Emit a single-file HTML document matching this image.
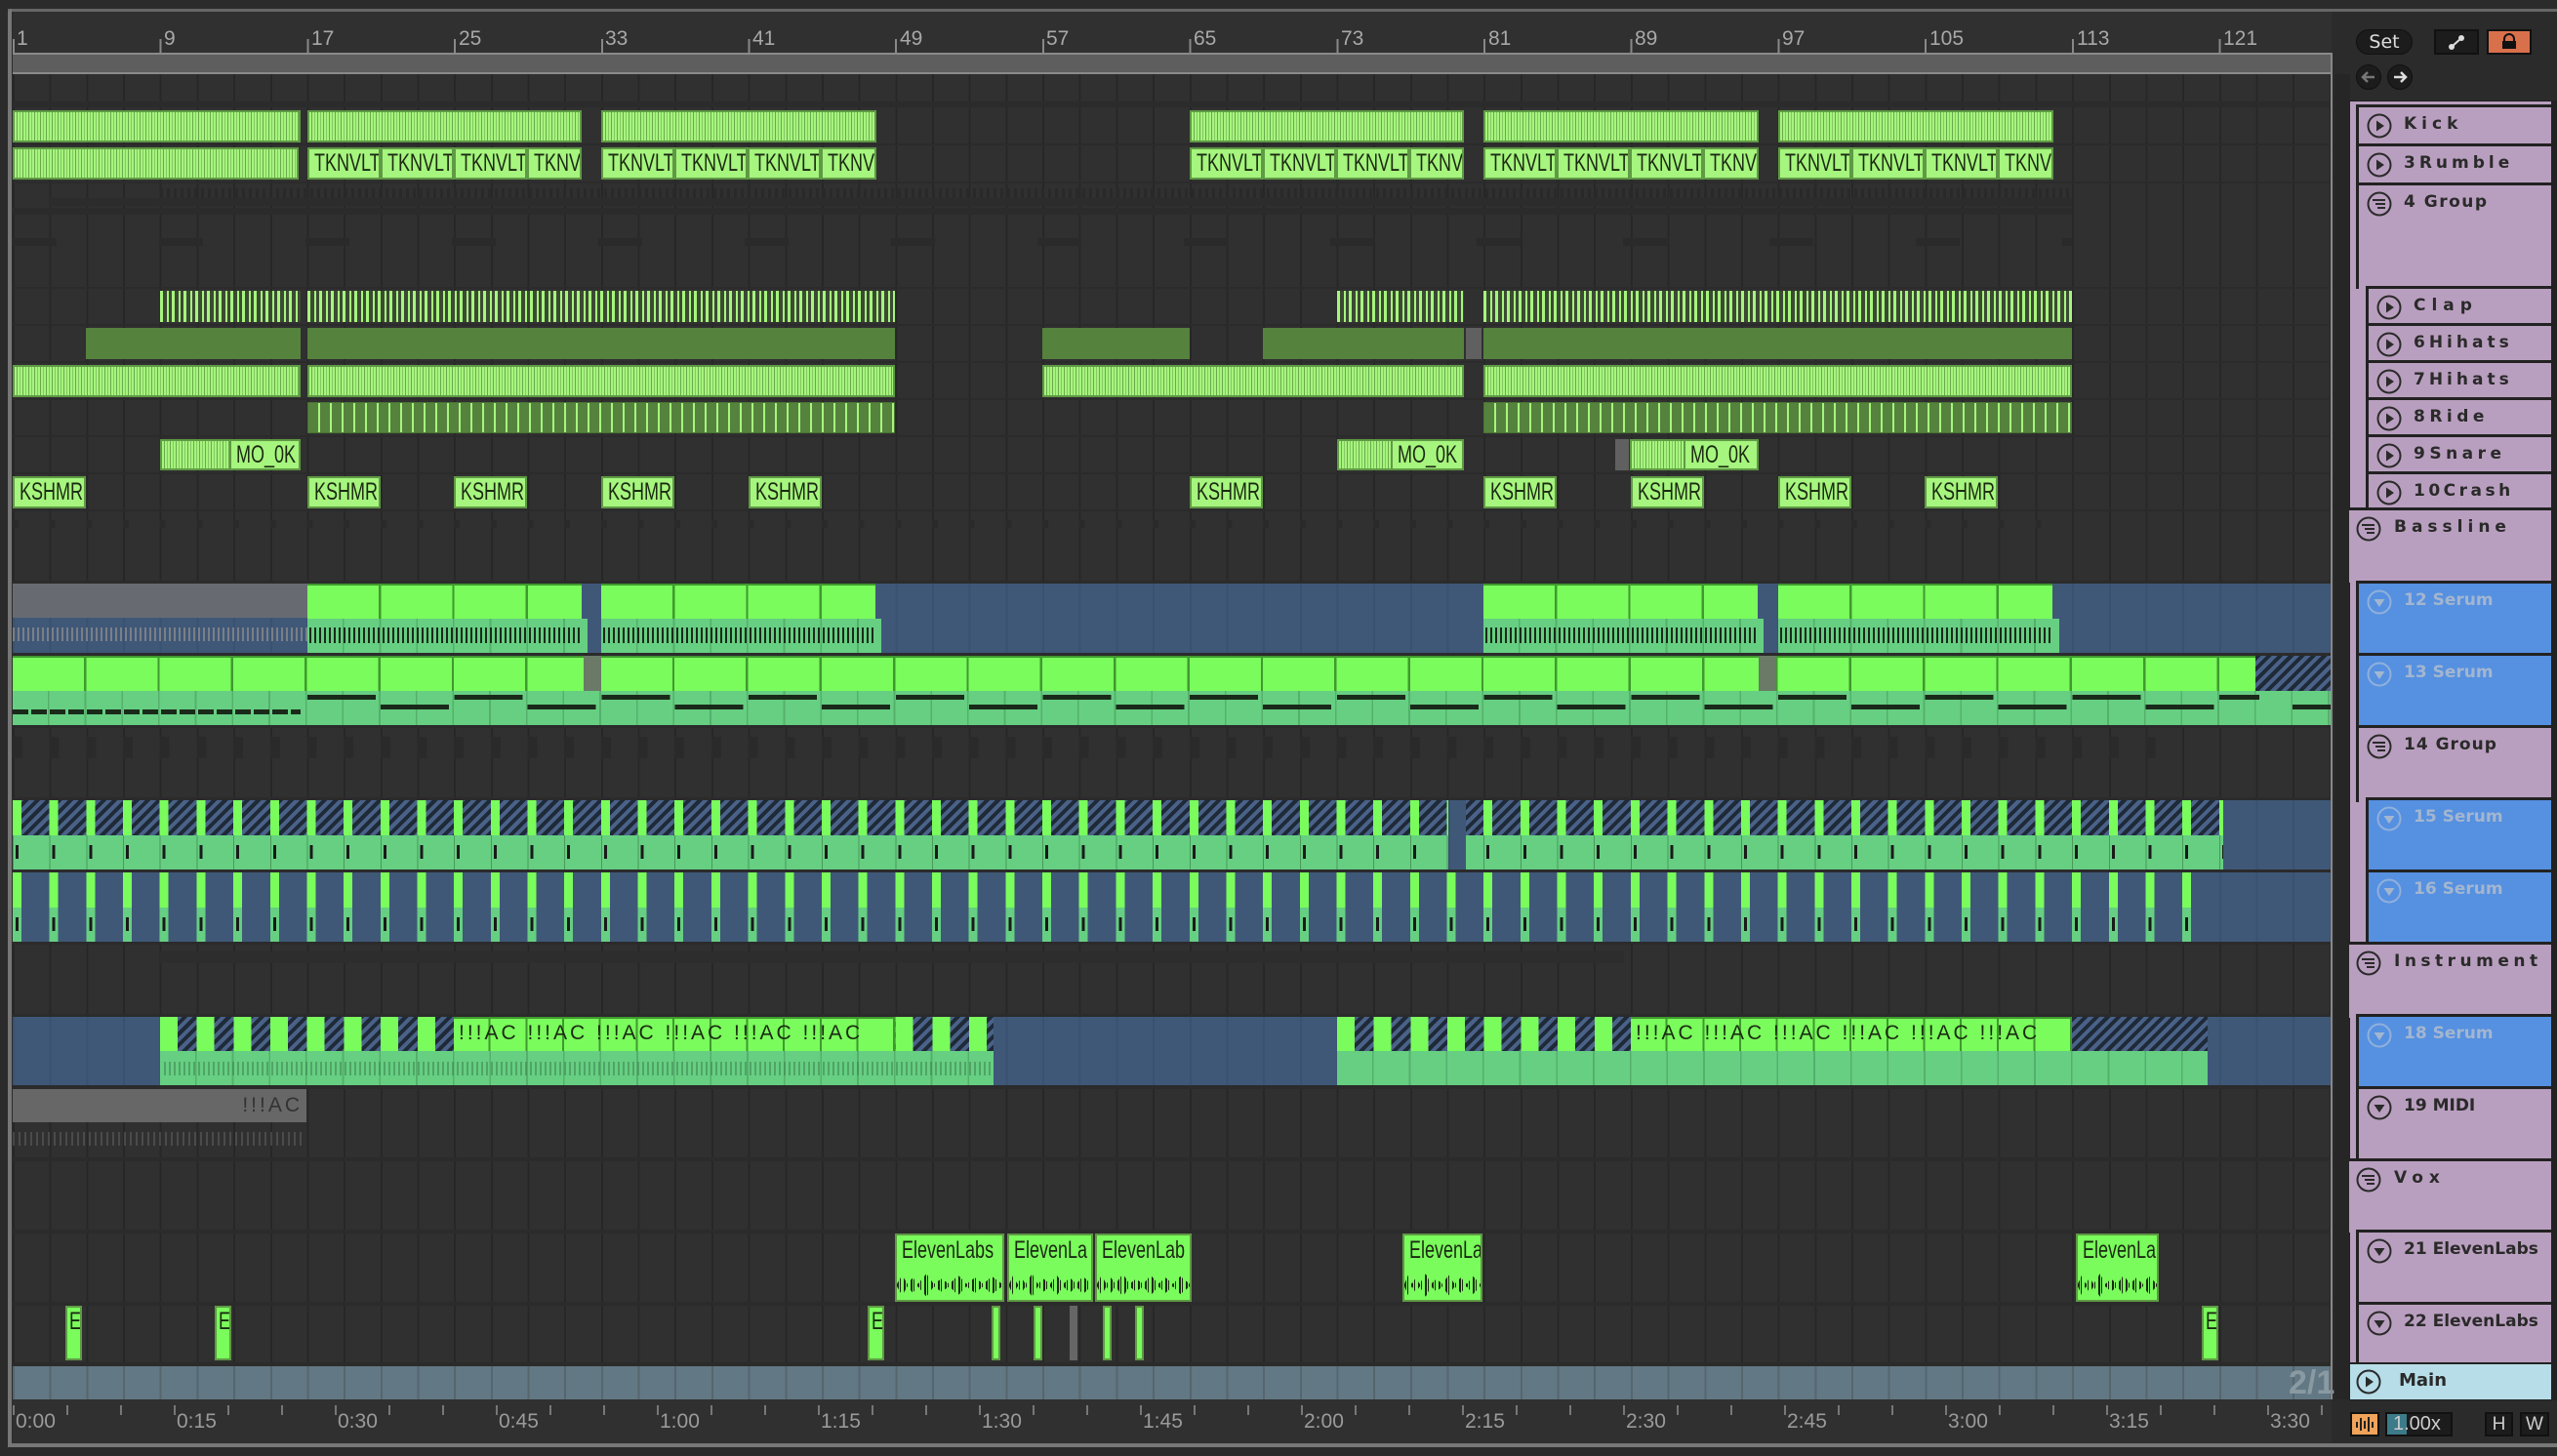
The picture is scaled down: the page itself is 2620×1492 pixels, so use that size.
<!DOCTYPE html>
<html><head><meta charset="utf-8"><style>
*{margin:0;padding:0;box-sizing:border-box}
body{width:2620px;height:1492px;background:#2b2b2b;position:relative;overflow:hidden;font-family:"Liberation Sans",sans-serif}
div{position:absolute}
.row{left:13px;width:2375px;background:repeating-linear-gradient(90deg,#272727 0 2px,transparent 2px 37.68px),#303030}
.st{background:repeating-linear-gradient(90deg,#a6f57e 0 2px,#6aa94c 2px 3px,#a6f57e 3px 5px,#86c862 5px 6px);border:2px solid #5f9a44}
.tx{background:#a6f57e;border:2px solid #5f9a44;color:#1b2a12;font-size:25px;line-height:28px;padding-left:5px;overflow:hidden;white-space:nowrap}
.tx i{font-style:normal;display:inline-block;transform:scaleX(.72);transform-origin:0 50%}
.clap{background:repeating-linear-gradient(90deg,#a6f57e 0 3px,#3c4a33 3px 7px,#a6f57e 7px 9px,#3c4a33 9px 12px)}
.dg{background:#55823d}
.ride{background:repeating-linear-gradient(90deg,#55823d 0 10px,#a6f57e 10px 12px);border:1px solid #4a7434}
.hd{background:repeating-linear-gradient(90deg,#7afc5c 0 73px,#3f9a2e 73px 75.36px);border-top:2px solid #3f9a2e}
.bd{background:repeating-linear-gradient(90deg,#66cf82 0 36px,#55b06c 36px 37.68px)}
.blue{background:repeating-linear-gradient(90deg,#3a5272 0 2px,transparent 2px 37.68px),#3f5878}
.hatch{background:repeating-linear-gradient(135deg,#1f2a38 0 4px,#4a6288 4px 8px)}
.tick{background:repeating-linear-gradient(90deg,#1a2a1a 0 2px,transparent 2px 5px)}
.num{color:#a8a8a8;font-size:21px;top:28px}
.tnum{color:#9a9a9a;font-size:21px;top:1445px}
.pr{background:#b99fbf;border-top:3px solid #222;border-left:3px solid #222;right:6px;color:#2a2a2a;font-family:"DejaVu Sans",sans-serif;font-weight:bold;font-size:17px;overflow:hidden;white-space:nowrap}
.pr span{position:absolute;top:7px}
.pr svg{position:absolute;top:6px}
.bl{background:#5690e0;color:#a3b6d0}
.lab{color:#1b2a12;font-size:21px;padding-left:4px;overflow:hidden;white-space:nowrap;line-height:30px}
.wv{background:repeating-linear-gradient(90deg,#1a2a12 0 2px,transparent 2px 3px,#1a2a12 3px 4px,transparent 4px 7px);clip-path:polygon(0 45%,5% 10%,10% 45%,15% 20%,20% 45%,28% 5%,35% 45%,42% 25%,50% 45%,58% 10%,66% 45%,74% 20%,82% 45%,90% 15%,100% 45%,100% 55%,90% 85%,82% 55%,74% 80%,66% 55%,58% 90%,50% 55%,42% 75%,35% 55%,28% 95%,20% 55%,15% 80%,10% 55%,5% 90%,0 55%)}
</style></head><body>
<div style="left:8px;top:9px;width:2612px;height:3px;background:#666"></div>
<div style="left:8px;top:9px;width:4px;height:1473px;background:#777;border-radius:4px 0 0 0"></div>
<div style="left:8px;top:1479px;width:2612px;height:4px;background:#777"></div>
<div style="left:13px;top:12px;width:2376px;height:43px;background:#303030"></div>
<div class="num" style="left:17px">1</div><div class="num" style="left:168px">9</div><div class="num" style="left:319px">17</div><div class="num" style="left:470px">25</div><div class="num" style="left:620px">33</div><div class="num" style="left:771px">41</div><div class="num" style="left:922px">49</div><div class="num" style="left:1072px">57</div><div class="num" style="left:1223px">65</div><div class="num" style="left:1374px">73</div><div class="num" style="left:1525px">81</div><div class="num" style="left:1675px">89</div><div class="num" style="left:1826px">97</div><div class="num" style="left:1977px">105</div><div class="num" style="left:2128px">113</div><div class="num" style="left:2278px">121</div>
<div style="left:13px;top:40px;width:2376px;height:15px;background:repeating-linear-gradient(90deg,#888 0 2px,transparent 2px 150.7px)"></div>
<div style="left:13px;top:54px;width:2376px;height:22px;background:#5e5e5e;border-top:2px solid #8a8a8a;border-bottom:2px solid #8a8a8a"></div>
<div class="row" style="top:76px;height:28px"></div>
<div class="row" style="top:110px;height:37px"></div>
<div class="row" style="top:149px;height:37px"></div>
<div class="row" style="top:188px;height:106px"></div>
<div class="row" style="top:296px;height:36px"></div>
<div class="row" style="top:334px;height:36px"></div>
<div class="row" style="top:372px;height:36px"></div>
<div class="row" style="top:410px;height:36px"></div>
<div class="row" style="top:448px;height:36px"></div>
<div class="row" style="top:486px;height:36px"></div>
<div class="row" style="top:524px;height:71px"></div>
<div class="row" style="top:598px;height:71px"></div>
<div class="row" style="top:672px;height:71px"></div>
<div class="row" style="top:746px;height:71px"></div>
<div class="row" style="top:820px;height:71px"></div>
<div class="row" style="top:894px;height:71px"></div>
<div class="row" style="top:968px;height:71px"></div>
<div class="row" style="top:1042px;height:70px"></div>
<div class="row" style="top:1116px;height:70px"></div>
<div class="row" style="top:1190px;height:70px"></div>
<div class="row" style="top:1264px;height:70px"></div>
<div class="row" style="top:1338px;height:58px"></div>
<div style="left:13px;top:1400px;width:2375px;height:34px;background:repeating-linear-gradient(90deg,#55666f 0 2px,transparent 2px 37.68px),#627884"></div>
<div style="left:2345px;top:1398px;color:#8a9aa2;font-size:34px;font-weight:bold">2/1</div>
<div style="left:13px;top:1434px;width:2376px;height:45px;background:#303030"></div>
<div style="left:13px;top:1440px;width:2376px;height:10px;background:repeating-linear-gradient(90deg,#777 0 2px,transparent 2px 55px)"></div>
<div class="tnum" style="left:16px">0:00</div><div class="tnum" style="left:181px">0:15</div><div class="tnum" style="left:346px">0:30</div><div class="tnum" style="left:511px">0:45</div><div class="tnum" style="left:676px">1:00</div><div class="tnum" style="left:841px">1:15</div><div class="tnum" style="left:1006px">1:30</div><div class="tnum" style="left:1171px">1:45</div><div class="tnum" style="left:1336px">2:00</div><div class="tnum" style="left:1501px">2:15</div><div class="tnum" style="left:1666px">2:30</div><div class="tnum" style="left:1831px">2:45</div><div class="tnum" style="left:1996px">3:00</div><div class="tnum" style="left:2161px">3:15</div><div class="tnum" style="left:2326px">3:30</div>

<div class="st" style="left:13px;top:113px;width:295px;height:33px"></div>
<div class="st" style="left:315px;top:113px;width:281px;height:33px"></div>
<div class="st" style="left:616px;top:113px;width:282px;height:33px"></div>
<div class="st" style="left:1219px;top:113px;width:281px;height:33px"></div>
<div class="st" style="left:1520px;top:113px;width:282px;height:33px"></div>
<div class="st" style="left:1822px;top:113px;width:282px;height:33px"></div>
<div class="st" style="left:13px;top:151px;width:293px;height:33px"></div>
<div class="tx" style="left:315px;top:151px;width:75px;height:33px"><i>TKNVLT</i></div><div class="tx" style="left:390px;top:151px;width:75px;height:33px"><i>TKNVLT</i></div><div class="tx" style="left:465px;top:151px;width:75px;height:33px"><i>TKNVLT</i></div><div class="tx" style="left:540px;top:151px;width:56px;height:33px"><i>TKNV</i></div>
<div class="tx" style="left:616px;top:151px;width:75px;height:33px"><i>TKNVLT</i></div><div class="tx" style="left:691px;top:151px;width:75px;height:33px"><i>TKNVLT</i></div><div class="tx" style="left:766px;top:151px;width:75px;height:33px"><i>TKNVLT</i></div><div class="tx" style="left:841px;top:151px;width:57px;height:33px"><i>TKNV</i></div>
<div class="tx" style="left:1219px;top:151px;width:75px;height:33px"><i>TKNVLT</i></div><div class="tx" style="left:1294px;top:151px;width:75px;height:33px"><i>TKNVLT</i></div><div class="tx" style="left:1369px;top:151px;width:75px;height:33px"><i>TKNVLT</i></div><div class="tx" style="left:1444px;top:151px;width:56px;height:33px"><i>TKNV</i></div>
<div class="tx" style="left:1520px;top:151px;width:75px;height:33px"><i>TKNVLT</i></div><div class="tx" style="left:1595px;top:151px;width:75px;height:33px"><i>TKNVLT</i></div><div class="tx" style="left:1670px;top:151px;width:75px;height:33px"><i>TKNVLT</i></div><div class="tx" style="left:1745px;top:151px;width:57px;height:33px"><i>TKNV</i></div>
<div class="tx" style="left:1822px;top:151px;width:75px;height:33px"><i>TKNVLT</i></div><div class="tx" style="left:1897px;top:151px;width:75px;height:33px"><i>TKNVLT</i></div><div class="tx" style="left:1972px;top:151px;width:75px;height:33px"><i>TKNVLT</i></div><div class="tx" style="left:2047px;top:151px;width:57px;height:33px"><i>TKNV</i></div>
<div style="left:164px;top:193px;width:1960px;height:10px;background:repeating-linear-gradient(90deg,#292929 0 3px,transparent 3px 7px)"></div>
<div style="left:50px;top:203px;width:2073px;height:8px;background:#2c2c2c"></div>
<div style="left:13px;top:213px;width:2110px;height:7px;background:#2b2b2b"></div>
<div style="left:13px;top:244px;width:2110px;height:8px;background:repeating-linear-gradient(90deg,#2a2a2a 0 45px,transparent 45px 150px)"></div>
<div class="clap" style="left:164px;top:298px;width:144px;height:32px"></div>
<div class="clap" style="left:315px;top:298px;width:602px;height:32px"></div>
<div class="clap" style="left:1370px;top:298px;width:130px;height:32px"></div>
<div class="clap" style="left:1520px;top:298px;width:603px;height:32px"></div>
<div class="dg" style="left:88px;top:336px;width:220px;height:32px"></div>
<div class="dg" style="left:315px;top:336px;width:602px;height:32px"></div>
<div class="dg" style="left:1068px;top:336px;width:151px;height:32px"></div>
<div class="dg" style="left:1294px;top:336px;width:206px;height:32px"></div>
<div style="left:1502px;top:336px;width:16px;height:32px;background:#606060"></div>
<div class="dg" style="left:1520px;top:336px;width:603px;height:32px"></div>
<div class="st" style="left:13px;top:374px;width:295px;height:33px"></div>
<div class="st" style="left:315px;top:374px;width:602px;height:33px"></div>
<div class="st" style="left:1068px;top:374px;width:432px;height:33px"></div>
<div class="st" style="left:1520px;top:374px;width:603px;height:33px"></div>
<div class="ride" style="left:315px;top:412px;width:602px;height:32px"></div>
<div class="ride" style="left:1520px;top:412px;width:603px;height:32px"></div>
<div class="st" style="left:164px;top:450px;width:144px;height:32px"></div>
<div class="tx" style="left:235px;top:450px;width:73px;height:32px"><i>MO_0K</i></div>
<div class="st" style="left:1370px;top:450px;width:130px;height:32px"></div>
<div class="tx" style="left:1425px;top:450px;width:75px;height:32px"><i>MO_0K</i></div>
<div style="left:1655px;top:450px;width:14px;height:32px;background:#606060"></div>
<div class="st" style="left:1670px;top:450px;width:132px;height:32px"></div>
<div class="tx" style="left:1725px;top:450px;width:77px;height:32px"><i>MO_0K</i></div>
<div class="tx" style="left:13px;top:488px;width:75px;height:33px"><i>KSHMR</i></div>
<div class="tx" style="left:315px;top:488px;width:75px;height:33px"><i>KSHMR</i></div>
<div class="tx" style="left:465px;top:488px;width:75px;height:33px"><i>KSHMR</i></div>
<div class="tx" style="left:616px;top:488px;width:75px;height:33px"><i>KSHMR</i></div>
<div class="tx" style="left:767px;top:488px;width:75px;height:33px"><i>KSHMR</i></div>
<div class="tx" style="left:1219px;top:488px;width:75px;height:33px"><i>KSHMR</i></div>
<div class="tx" style="left:1520px;top:488px;width:75px;height:33px"><i>KSHMR</i></div>
<div class="tx" style="left:1671px;top:488px;width:75px;height:33px"><i>KSHMR</i></div>
<div class="tx" style="left:1822px;top:488px;width:75px;height:33px"><i>KSHMR</i></div>
<div class="tx" style="left:1972px;top:488px;width:75px;height:33px"><i>KSHMR</i></div>
<div style="left:13px;top:533px;width:2110px;height:8px;background:repeating-linear-gradient(90deg,#2a2a2a 0 6px,transparent 6px 37.68px)"></div>

<div class="blue" style="left:13px;top:598px;width:2375px;height:71px"></div>
<div style="left:13px;top:598px;width:302px;height:35px;background:#676b71"></div>
<div style="left:13px;top:643px;width:302px;height:14px;background:repeating-linear-gradient(90deg,#7a7f88 0 2px,transparent 2px 5px)"></div>
<div class="hd" style="left:315px;top:598px;width:281px;height:36px"></div><div class="bd" style="left:315px;top:634px;width:287px;height:35px"></div><div class="tick" style="left:317px;top:643px;width:280px;height:16px"></div>
<div class="hd" style="left:616px;top:598px;width:281px;height:36px"></div><div class="bd" style="left:616px;top:634px;width:287px;height:35px"></div><div class="tick" style="left:618px;top:643px;width:280px;height:16px"></div>
<div class="hd" style="left:1520px;top:598px;width:281px;height:36px"></div><div class="bd" style="left:1520px;top:634px;width:287px;height:35px"></div><div class="tick" style="left:1522px;top:643px;width:280px;height:16px"></div>
<div class="hd" style="left:1822px;top:598px;width:281px;height:36px"></div><div class="bd" style="left:1822px;top:634px;width:288px;height:35px"></div><div class="tick" style="left:1824px;top:643px;width:280px;height:16px"></div>
<div class="hd" style="left:13px;top:672px;width:2298px;height:36px"></div>
<div class="hatch" style="left:2311px;top:672px;width:77px;height:36px"></div>
<div class="bd" style="left:13px;top:708px;width:2375px;height:35px"></div>
<div style="left:598px;top:672px;width:18px;height:36px;background:#6a7a66"></div>
<div style="left:1802px;top:672px;width:18px;height:36px;background:#6a7a66"></div>
<div style="left:13px;top:727px;width:295px;height:5px;background:repeating-linear-gradient(90deg,#1a2a1a 0 16px,transparent 16px 19px)"></div>
<div style="left:315px;top:712px;width:2000px;height:5px;background:repeating-linear-gradient(90deg,#1a2a1a 0 70px,transparent 70px 150.7px)"></div>
<div style="left:390px;top:722px;width:2000px;height:5px;background:repeating-linear-gradient(90deg,#1a2a1a 0 70px,transparent 70px 150.7px)"></div>
<div style="left:13px;top:755px;width:2210px;height:22px;background:repeating-linear-gradient(90deg,#2a2a2a 0 10px,transparent 10px 37.68px)"></div>
<div class="blue" style="left:13px;top:820px;width:2375px;height:71px"></div>
<div style="left:13px;top:820px;width:2265px;height:36px;background:repeating-linear-gradient(90deg,#7afc5c 0 9px,transparent 9px 37.68px),repeating-linear-gradient(135deg,#1f2a38 0 4px,#4a6288 4px 8px)"></div>
<div style="left:13px;top:856px;width:2265px;height:35px;background:repeating-linear-gradient(90deg,#4a9a5a 0 1px,#66cf82 1px 37.68px)"></div>
<div style="left:16px;top:866px;width:2262px;height:14px;background:repeating-linear-gradient(90deg,#1a1a1a 0 3px,transparent 3px 37.68px)"></div>
<div class="blue" style="left:1484px;top:820px;width:18px;height:71px"></div>
<div class="blue" style="left:13px;top:894px;width:2375px;height:71px"></div>
<div style="left:13px;top:894px;width:2232px;height:36px;background:repeating-linear-gradient(90deg,#7afc5c 0 9px,transparent 9px 37.68px)"></div>
<div style="left:13px;top:930px;width:2232px;height:35px;background:repeating-linear-gradient(90deg,#66cf82 0 9px,transparent 9px 37.68px)"></div>
<div style="left:16px;top:940px;width:2229px;height:14px;background:repeating-linear-gradient(90deg,#1a1a1a 0 3px,transparent 3px 37.68px)"></div>
<div style="left:164px;top:975px;width:1500px;height:12px;background:#2d2d2d"></div>
<div class="blue" style="left:13px;top:1042px;width:2375px;height:70px"></div>
<div style="left:164px;top:1042px;width:854px;height:35px;background:repeating-linear-gradient(90deg,#7afc5c 0 18px,transparent 18px 37.68px),repeating-linear-gradient(135deg,#1f2a38 0 4px,#4a6288 4px 8px)"></div>
<div class="bd" style="left:164px;top:1077px;width:854px;height:35px"></div>
<div class="hd" style="left:465px;top:1042px;width:452px;height:35px;background:repeating-linear-gradient(90deg,#7afc5c 0 35.7px,#3f9a2e 35.7px 37.68px)"></div>
<div class="lab" style="left:466px;top:1044px;width:450px;height:32px;letter-spacing:3px">!!!AC !!!AC !!!AC !!!AC !!!AC !!!AC</div>
<div style="left:1370px;top:1042px;width:753px;height:35px;background:repeating-linear-gradient(90deg,#7afc5c 0 18px,transparent 18px 37.68px),repeating-linear-gradient(135deg,#1f2a38 0 4px,#4a6288 4px 8px)"></div>
<div class="hd" style="left:1671px;top:1042px;width:452px;height:35px;background:repeating-linear-gradient(90deg,#7afc5c 0 35.7px,#3f9a2e 35.7px 37.68px)"></div>
<div class="lab" style="left:1672px;top:1044px;width:450px;height:32px;letter-spacing:3px">!!!AC !!!AC !!!AC !!!AC !!!AC !!!AC</div>
<div class="hatch" style="left:2123px;top:1042px;width:139px;height:35px"></div>
<div class="bd" style="left:1370px;top:1077px;width:892px;height:35px"></div>
<div style="left:168px;top:1088px;width:850px;height:14px;background:repeating-linear-gradient(90deg,#3a7a4a 0 2px,transparent 2px 5px);opacity:.5"></div>
<div style="left:13px;top:1116px;width:301px;height:34px;background:#676767;color:#333;font-size:21px;text-align:right;padding-right:4px;line-height:34px;letter-spacing:3px">!!!AC</div>
<div style="left:13px;top:1160px;width:300px;height:14px;background:repeating-linear-gradient(90deg,#666 0 2px,transparent 2px 6px);opacity:.5"></div>
<div class="tx" style="left:917px;top:1264px;width:112px;height:70px;background:#7afc5c;line-height:30px"><i>ElevenLabs</i></div>
<div class="tx" style="left:1032px;top:1264px;width:88px;height:70px;background:#7afc5c;line-height:30px"><i>ElevenLa</i></div>
<div class="tx" style="left:1122px;top:1264px;width:99px;height:70px;background:#7afc5c;line-height:30px"><i>ElevenLab</i></div>
<div class="tx" style="left:1437px;top:1264px;width:82px;height:70px;background:#7afc5c;line-height:30px"><i>ElevenLa</i></div>
<div class="tx" style="left:2127px;top:1264px;width:85px;height:70px;background:#7afc5c;line-height:30px"><i>ElevenLa</i></div>
<div class="wv" style="left:919px;top:1304px;width:108px;height:26px"></div>
<div class="wv" style="left:1034px;top:1304px;width:84px;height:26px"></div>
<div class="wv" style="left:1124px;top:1304px;width:95px;height:26px"></div>
<div class="wv" style="left:1439px;top:1304px;width:78px;height:26px"></div>
<div class="wv" style="left:2129px;top:1304px;width:81px;height:26px"></div>
<div class="tx" style="left:67px;top:1338px;width:17px;height:56px;background:#7afc5c;padding-left:2px"><i>E</i></div>
<div class="tx" style="left:220px;top:1338px;width:17px;height:56px;background:#7afc5c;padding-left:2px"><i>E</i></div>
<div class="tx" style="left:889px;top:1338px;width:17px;height:56px;background:#7afc5c;padding-left:2px"><i>E</i></div>
<div class="tx" style="left:1016px;top:1338px;width:9px;height:56px;background:#7afc5c"></div>
<div class="tx" style="left:1059px;top:1338px;width:9px;height:56px;background:#7afc5c"></div>
<div style="left:1096px;top:1338px;width:8px;height:56px;background:#666"></div>
<div class="tx" style="left:1130px;top:1338px;width:9px;height:56px;background:#7afc5c"></div>
<div class="tx" style="left:1163px;top:1338px;width:9px;height:56px;background:#7afc5c"></div>
<div class="tx" style="left:2256px;top:1338px;width:17px;height:56px;background:#7afc5c;padding-left:2px"><i>E</i></div>

<div style="left:2388px;top:54px;width:2px;height:1380px;background:#888"></div>
<div style="left:2392px;top:76px;width:16px;height:1358px;background:#262626"></div>

<div style="left:2414px;top:30px;width:58px;height:26px;border-radius:13px;background:#1c1c1c;border:1px solid #111;color:#ddd;font-size:19px;text-align:center;line-height:24px;font-family:'DejaVu Sans',sans-serif">Set</div>
<div style="left:2494px;top:30px;width:46px;height:26px;background:#1c1c1c;border:2px solid #111"><svg width="42" height="22"><line x1="16" y1="16" x2="26" y2="7" stroke="#ddd" stroke-width="2"/><circle cx="16" cy="16" r="3" fill="#ddd"/><circle cx="26" cy="7" r="3" fill="#ddd"/></svg></div>
<div style="left:2548px;top:30px;width:46px;height:26px;background:#d9704c;border:2px solid #111"><svg width="42" height="22"><rect x="14" y="10" width="14" height="8" fill="#111"/><path d="M16 10 V8 A5 5 0 0 1 26 8 V10" stroke="#111" stroke-width="2" fill="none"/></svg></div>
<div style="left:2414px;top:66px;width:26px;height:26px;border-radius:13px;background:#1c1c1c;border:1px solid #111"><svg width="24" height="24"><path d="M18 12 H7 M11 7 L6 12 L11 17" stroke="#777" stroke-width="2.5" fill="none"/></svg></div>
<div style="left:2446px;top:66px;width:26px;height:26px;border-radius:13px;background:#1c1c1c;border:1px solid #111"><svg width="24" height="24"><path d="M6 12 H17 M13 7 L18 12 L13 17" stroke="#ddd" stroke-width="2.5" fill="none"/></svg></div>

<div style="left:2407px;top:103px;width:213px;height:1332px;background:#222"></div>
<div style="left:2408px;top:104px;width:206px;height:1292px;background:#b99fbf"></div>
<svg width="0" height="0" style="position:absolute"><defs>
<symbol id="play" viewBox="0 0 26 26"><circle cx="13" cy="13" r="11.5" stroke="#2a2a2a" stroke-width="2" fill="none"/><path d="M10 7.5 L18 13 L10 18.5Z" fill="#2a2a2a"/></symbol>
<symbol id="grp" viewBox="0 0 26 26"><circle cx="13" cy="13" r="11.5" stroke="#2a2a2a" stroke-width="2" fill="none"/><path d="M6 9 H19 M9 13 H19 M11 17 H19" stroke="#2a2a2a" stroke-width="2"/></symbol>
<symbol id="down" viewBox="0 0 26 26"><circle cx="13" cy="13" r="11.5" stroke="#2a2a2a" stroke-width="2" fill="none"/><path d="M7.5 10 L18.5 10 L13 18Z" fill="#2a2a2a"/></symbol>
<symbol id="downb" viewBox="0 0 26 26"><circle cx="13" cy="13" r="11.5" stroke="#8fb0dc" stroke-width="2" fill="none"/><path d="M7.5 10 L18.5 10 L13 18Z" fill="#a3b6d0"/></symbol>
</defs></svg>
<div class="pr" style="left:2414px;top:107px;height:40px"><svg width="26" height="26" style="left:8px"><use href="#play"/></svg><span style="left:46px;letter-spacing:5px">Kick</span></div>
<div class="pr" style="left:2414px;top:147px;height:40px"><svg width="26" height="26" style="left:8px"><use href="#play"/></svg><span style="left:46px;letter-spacing:4px">3Rumble</span></div>
<div class="pr" style="left:2414px;top:187px;height:109px"><svg width="26" height="26" style="left:8px"><use href="#grp"/></svg><span style="left:46px;letter-spacing:1.5px">4 Group</span></div>
<div class="pr" style="left:2424px;top:293px;height:40px"><svg width="26" height="26" style="left:8px"><use href="#play"/></svg><span style="left:46px;letter-spacing:6px">Clap</span></div>
<div class="pr" style="left:2424px;top:331px;height:40px"><svg width="26" height="26" style="left:8px"><use href="#play"/></svg><span style="left:46px;letter-spacing:4px">6Hihats</span></div>
<div class="pr" style="left:2424px;top:369px;height:40px"><svg width="26" height="26" style="left:8px"><use href="#play"/></svg><span style="left:46px;letter-spacing:4px">7Hihats</span></div>
<div class="pr" style="left:2424px;top:407px;height:40px"><svg width="26" height="26" style="left:8px"><use href="#play"/></svg><span style="left:46px;letter-spacing:4.5px">8Ride</span></div>
<div class="pr" style="left:2424px;top:445px;height:40px"><svg width="26" height="26" style="left:8px"><use href="#play"/></svg><span style="left:46px;letter-spacing:4.5px">9Snare</span></div>
<div class="pr" style="left:2424px;top:483px;height:38px"><svg width="26" height="26" style="left:8px"><use href="#play"/></svg><span style="left:46px;letter-spacing:3.5px">10Crash</span></div>
<div class="pr" style="left:2407px;top:520px;height:77px;border-left:none"><svg width="26" height="26" style="left:7px"><use href="#grp"/></svg><span style="left:46px;letter-spacing:5px">Bassline</span></div>
<div class="pr bl" style="left:2414px;top:595px;height:77px"><svg width="26" height="26" style="left:8px"><use href="#downb"/></svg><span style="left:46px">12 Serum</span></div>
<div class="pr bl" style="left:2414px;top:669px;height:77px"><svg width="26" height="26" style="left:8px"><use href="#downb"/></svg><span style="left:46px">13 Serum</span></div>
<div class="pr" style="left:2414px;top:743px;height:79px"><svg width="26" height="26" style="left:8px"><use href="#grp"/></svg><span style="left:46px;letter-spacing:1px">14 Group</span></div>
<div class="pr bl" style="left:2424px;top:817px;height:77px"><svg width="26" height="26" style="left:8px"><use href="#downb"/></svg><span style="left:46px">15 Serum</span></div>
<div class="pr bl" style="left:2424px;top:891px;height:75px"><svg width="26" height="26" style="left:8px"><use href="#downb"/></svg><span style="left:46px">16 Serum</span></div>
<div class="pr" style="left:2407px;top:965px;height:78px;border-left:none"><svg width="26" height="26" style="left:7px"><use href="#grp"/></svg><span style="left:46px;letter-spacing:4.5px">Instrument</span></div>
<div class="pr bl" style="left:2414px;top:1039px;height:77px"><svg width="26" height="26" style="left:8px"><use href="#downb"/></svg><span style="left:46px">18 Serum</span></div>
<div class="pr" style="left:2414px;top:1113px;height:77px"><svg width="26" height="26" style="left:8px"><use href="#down"/></svg><span style="left:46px">19 MIDI</span></div>
<div class="pr" style="left:2407px;top:1187px;height:76px;border-left:none"><svg width="26" height="26" style="left:7px"><use href="#grp"/></svg><span style="left:46px;letter-spacing:6px">Vox</span></div>
<div class="pr" style="left:2414px;top:1260px;height:77px"><svg width="26" height="26" style="left:8px"><use href="#down"/></svg><span style="left:46px">21 ElevenLabs</span></div>
<div class="pr" style="left:2414px;top:1334px;height:62px"><svg width="26" height="26" style="left:8px"><use href="#down"/></svg><span style="left:46px">22 ElevenLabs</span></div>
<div style="left:2408px;top:1398px;width:206px;height:36px;background:#b6dde8;color:#2a2a2a;font-size:21px;font-weight:bold;font-family:'DejaVu Sans',sans-serif"><svg width="26" height="26" style="position:absolute;left:6px;top:5px"><use href="#play"/></svg><span style="position:absolute;left:50px;top:6px;font-size:18px">Main</span></div>

<div style="left:2408px;top:1447px;width:30px;height:25px;background:#f0a35a;border:2px solid #111"><svg width="26" height="21"><path d="M5 8v6M9 4v13M13 7v8M17 3v15M21 8v6" stroke="#222" stroke-width="2"/></svg></div>
<div style="left:2444px;top:1447px;width:69px;height:25px;background:#1c1c1c;border:2px solid #111;color:#ccc;font-size:20px;line-height:21px;padding-left:6px"><div style="left:0;top:0;width:20px;height:21px;background:#3b7b8a"></div><span style="position:relative">1.00x</span></div>
<div style="left:2546px;top:1447px;width:29px;height:25px;background:#1c1c1c;border:2px solid #111;color:#ccc;font-size:19px;text-align:center;line-height:21px">H</div>
<div style="left:2582px;top:1447px;width:30px;height:25px;background:#1c1c1c;border:2px solid #111;color:#ccc;font-size:19px;text-align:center;line-height:21px">W</div>
</body></html>
